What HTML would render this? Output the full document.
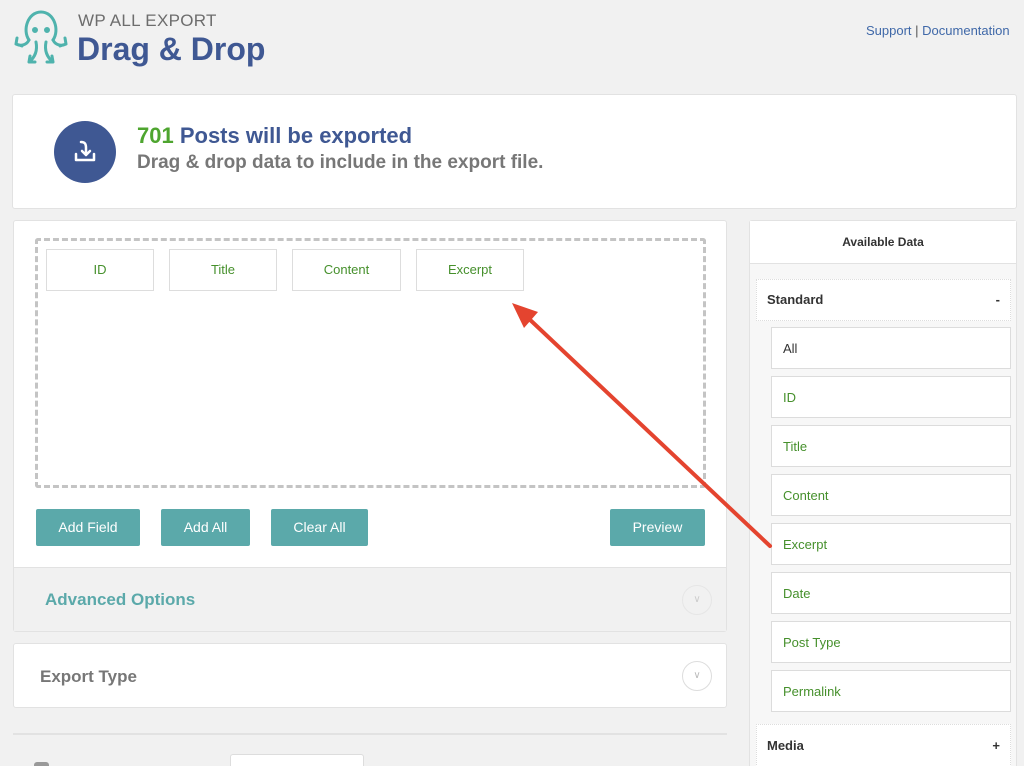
<!DOCTYPE html>
<html><head><meta charset="utf-8"><style>
*{box-sizing:border-box;margin:0;padding:0}
html,body{width:1024px;height:766px;overflow:hidden}
body{background:#f1f1f1;font-family:"Liberation Sans",Arial,sans-serif;position:relative}
.abs{position:absolute}
.box{position:absolute;background:#fff;border:1px solid #e2e2e2;border-radius:3px}
.fld{position:absolute;top:249px;height:42px;border:1px solid #ddd;background:#fff;color:#46902c;font-size:13px;text-align:center;line-height:40px}
.btn{position:absolute;top:509px;height:37px;background:#5ba9aa;color:#fff;font-size:14px;text-align:center;line-height:37px;border-radius:2px}
.item{position:absolute;left:771px;width:240px;height:42px;background:#fff;border:1px solid #dcdcdc;font-size:13px;line-height:42px;padding-left:11px;color:#46902c}
.circ{position:absolute;width:30px;height:30px;border-radius:50%;border:1px solid #ddd;color:#bbb;font-size:10px;text-align:center;line-height:28px}
</style></head><body>
<svg class="abs" style="left:12px;top:8px" width="58" height="60" viewBox="0 0 58 60" fill="none" stroke="#4fb3ad" stroke-width="3" stroke-linecap="round" stroke-linejoin="round">
<path d="M17 32 C10 22 16 4 29 4 C42 4 48 22 41 32"/>
<circle cx="23" cy="22" r="1.5" fill="#4fb3ad"/><circle cx="35" cy="22" r="1.5" fill="#4fb3ad"/>
<path d="M17 32 C14 38 8 38 4 36 M4 36 l1-6 M4 36 l6 2"/>
<path d="M41 32 C44 38 50 38 54 36 M54 36 l-1-6 M54 36 l-6 2"/>
<path d="M24 34 C26 44 22 50 17 54 M17 54 l1-6 M17 54 l6 0"/>
<path d="M34 34 C32 44 36 50 41 54 M41 54 l-1-6 M41 54 l-6 0"/>
</svg>
<div class="abs" style="left:78px;top:11px;font-size:17px;color:#6d6d6d;letter-spacing:.3px">WP ALL EXPORT</div>
<div class="abs" style="left:77px;top:31px;font-size:32px;font-weight:bold;color:#3f5893">Drag &amp; Drop</div>
<div class="abs" style="left:866px;top:23px;font-size:13px;color:#3f68a8">Support <span style="color:#555">|</span> Documentation</div>

<div class="box" style="left:12px;top:94px;width:1005px;height:115px"></div>
<div class="abs" style="left:54px;top:121px;width:62px;height:62px;border-radius:50%;background:#3f5893"></div>
<svg class="abs" style="left:72px;top:139px" width="26" height="26" viewBox="0 0 26 26" fill="none" stroke="#fff" stroke-width="2.5" stroke-linecap="round" stroke-linejoin="round">
<path d="M9 3 C13 3 14 5 14 9 V16 M10 12 l4 4 4-4"/><path d="M4 15 V21 H22 V15"/></svg>
<div class="abs" style="left:137px;top:123px;font-size:22px;font-weight:bold;color:#3f5893"><span style="color:#4ea52f">701</span> Posts will be exported</div>
<div class="abs" style="left:137px;top:152px;font-size:19px;font-weight:bold;color:#777">Drag &amp; drop data to include in the export file.</div>

<div class="box" style="left:13px;top:220px;width:714px;height:412px"></div>
<div class="abs" style="left:35px;top:238px;width:671px;height:250px;border:3px dashed #c4c4c4;border-radius:3px"></div>
<div class="fld" style="left:46px;width:108px">ID</div>
<div class="fld" style="left:169px;width:108px">Title</div>
<div class="fld" style="left:292px;width:109px">Content</div>
<div class="fld" style="left:416px;width:108px">Excerpt</div>
<div class="btn" style="left:36px;width:104px">Add Field</div>
<div class="btn" style="left:161px;width:89px">Add All</div>
<div class="btn" style="left:271px;width:97px">Clear All</div>
<div class="btn" style="left:610px;width:95px">Preview</div>
<div class="abs" style="left:14px;top:567px;width:712px;height:64px;background:#f1f1f1;border-top:1px solid #e2e2e2"></div>
<div class="abs" style="left:45px;top:590px;font-size:17px;font-weight:bold;color:#5ba9aa">Advanced Options</div>
<div class="circ" style="left:682px;top:585px;border-color:#e6e6e6;color:#ccc">&#8744;</div>

<div class="box" style="left:13px;top:643px;width:714px;height:65px"></div>
<div class="abs" style="left:40px;top:667px;font-size:17px;font-weight:bold;color:#777">Export Type</div>
<div class="circ" style="left:682px;top:661px">&#8744;</div>
<div class="abs" style="left:13px;top:733px;width:714px;height:2px;background:#e2e2e2"></div>
<div class="abs" style="left:34px;top:762px;width:15px;height:10px;border-radius:3px;background:#999"></div>
<div class="abs" style="left:230px;top:754px;width:134px;height:20px;background:#fff;border:1px solid #ddd;border-radius:3px"></div>

<div class="box" style="left:749px;top:220px;width:268px;height:560px;background:#f7f7f7"></div>
<div class="abs" style="left:750px;top:221px;width:266px;height:43px;background:#fff;border-bottom:1px solid #e2e2e2;text-align:center;font-size:12px;font-weight:bold;color:#333;line-height:43px">Available Data</div>
<div class="abs" style="left:756px;top:279px;width:255px;height:42px;background:#fff;border:1px dotted #ddd;font-size:13px;font-weight:bold;color:#333;line-height:40px;padding:0 10px">Standard<span style="float:right">-</span></div>
<div class="item" style="top:327px;color:#333">All</div>
<div class="item" style="top:376px">ID</div>
<div class="item" style="top:425px">Title</div>
<div class="item" style="top:474px">Content</div>
<div class="item" style="top:523px">Excerpt</div>
<div class="item" style="top:572px">Date</div>
<div class="item" style="top:621px">Post Type</div>
<div class="item" style="top:670px">Permalink</div>
<div class="abs" style="left:756px;top:724px;width:255px;height:45px;background:#fff;border:1px dotted #ddd;font-size:13px;font-weight:bold;color:#333;line-height:42px;padding:0 10px">Media<span style="float:right">+</span></div>

<svg class="abs" style="left:0;top:0" width="1024" height="766">
<line x1="770" y1="546" x2="526" y2="316" stroke="#e4442f" stroke-width="4" stroke-linecap="round"/>
<polygon points="512,303 538,312 524,328" fill="#e4442f"/>
</svg>
</body></html>
